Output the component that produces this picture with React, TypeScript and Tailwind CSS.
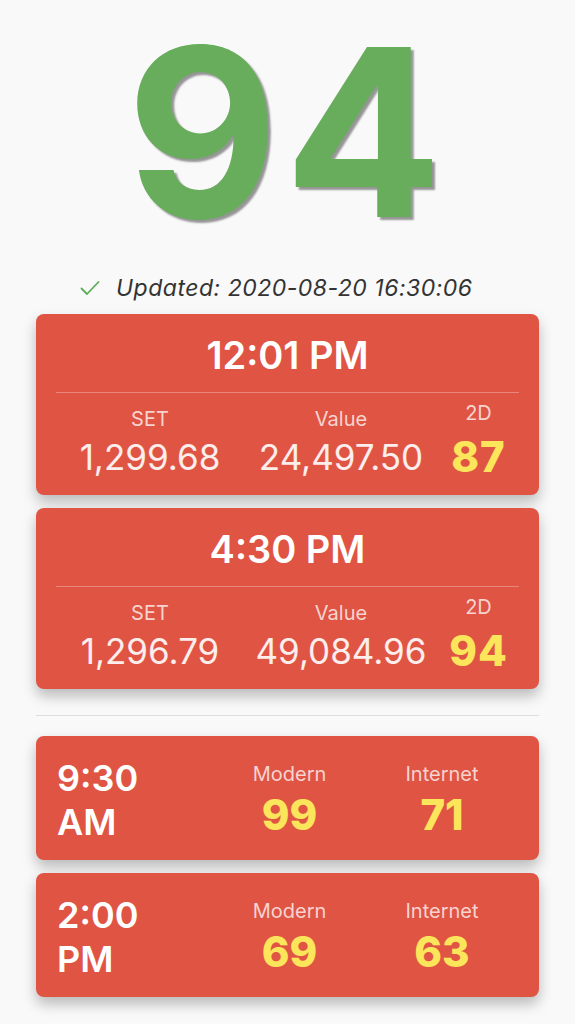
import React from "react"

type Round = {
  time: string
  set: string
  value: string
  twoD: string
}

type Session = {
  time: string
  ampm: string
  modern: string
  internet: string
}

const rounds: Round[] = [
  { time: "12:01 PM", set: "1,299.68", value: "24,497.50", twoD: "87" },
  { time: "4:30 PM", set: "1,296.79", value: "49,084.96", twoD: "94" },
]

const sessions: Session[] = [
  { time: "9:30", ampm: "AM", modern: "99", internet: "71" },
  { time: "2:00", ampm: "PM", modern: "69", internet: "63" },
]

const cardClass =
  "rounded-lg bg-[#e05444] text-white shadow-[0_7px_14px_rgba(0,0,0,0.26)]"

const RoundCard = ({ r }: { r: Round }) => (
  <div className={cardClass + " h-[181px] px-5 pt-[19px]"}>
    <div className="text-center text-[38px] font-semibold leading-[44px]">
      {r.time}
    </div>
    <div className="mt-[15px] h-px bg-white/30" />
    <div className="grid grid-cols-[188px_194px_1fr] pt-[14px]">
      <div className="flex flex-col items-center">
        <span className="text-[20px] leading-6 text-white/75">SET</span>
        <span className="mt-[6px] text-[35px] leading-10 text-white/90">
          {r.set}
        </span>
      </div>
      <div className="flex flex-col items-center">
        <span className="text-[20px] leading-6 text-white/75">Value</span>
        <span className="mt-[6px] text-[35px] leading-10 text-white/90">
          {r.value}
        </span>
      </div>
      <div className="flex flex-col items-center">
        <span className="-mt-[6px] text-[20px] leading-6 text-white/75">2D</span>
        <span className="mt-[9px] text-[42px] font-extrabold leading-[46px] tracking-[1px] text-[#fbe55b]">
          {r.twoD}
        </span>
      </div>
    </div>
  </div>
)

const SessionCard = ({ s }: { s: Session }) => (
  <div className={cardClass + " flex h-[124px] items-center pl-[21px] pt-1"}>
    <div className="w-[150px] text-[36px] font-semibold leading-[44px]">
      <div>{s.time}</div>
      <div>{s.ampm}</div>
    </div>
    <div className="flex w-[165px] flex-col items-center">
      <span className="text-[20px] leading-6 text-white/75">Modern</span>
      <span className="mt-[6px] text-[42px] font-extrabold leading-[46px] text-[#fbe55b]">
        {s.modern}
      </span>
    </div>
    <div className="flex w-[140px] flex-col items-center">
      <span className="text-[20px] leading-6 text-white/75">Internet</span>
      <span className="mt-[6px] text-[42px] font-extrabold leading-[46px] text-[#fbe55b]">
        {s.internet}
      </span>
    </div>
  </div>
)

export default function App() {
  return (
    <div className="min-h-[1024px] bg-[#f9f9f9] font-['Inter',sans-serif] text-[#333]">
      <div className="pt-[3px] text-center text-[234px] font-bold leading-[1.1] tracking-[6px] text-[#67ad5c] [text-shadow:3px_3px_2px_rgba(0,0,0,0.4)]">
        94
      </div>
      <div className="mt-[14px] flex items-center gap-4 pl-[80px]">
        <svg width="20" height="16" viewBox="0 0 20 16" fill="none">
          <path
            d="M1.5 8.5 L7 14 L18.5 2"
            stroke="#5cae5a"
            strokeWidth="1.8"
            strokeLinecap="round"
            strokeLinejoin="round"
          />
        </svg>
        <span className="text-[23px] italic leading-7 tracking-[0.5px] text-[#333]">
          Updated: 2020-08-20 16:30:06
        </span>
      </div>
      <div className="mx-9 mt-3 flex flex-col gap-[13px]">
        {rounds.map((r, i) => (
          <RoundCard key={i} r={r} />
        ))}
      </div>
      <div className="mx-9 mt-[26px] h-px bg-[#dedede]" />
      <div className="mx-9 mt-5 flex flex-col gap-[13px]">
        {sessions.map((s, i) => (
          <SessionCard key={i} s={s} />
        ))}
      </div>
    </div>
  )
}
